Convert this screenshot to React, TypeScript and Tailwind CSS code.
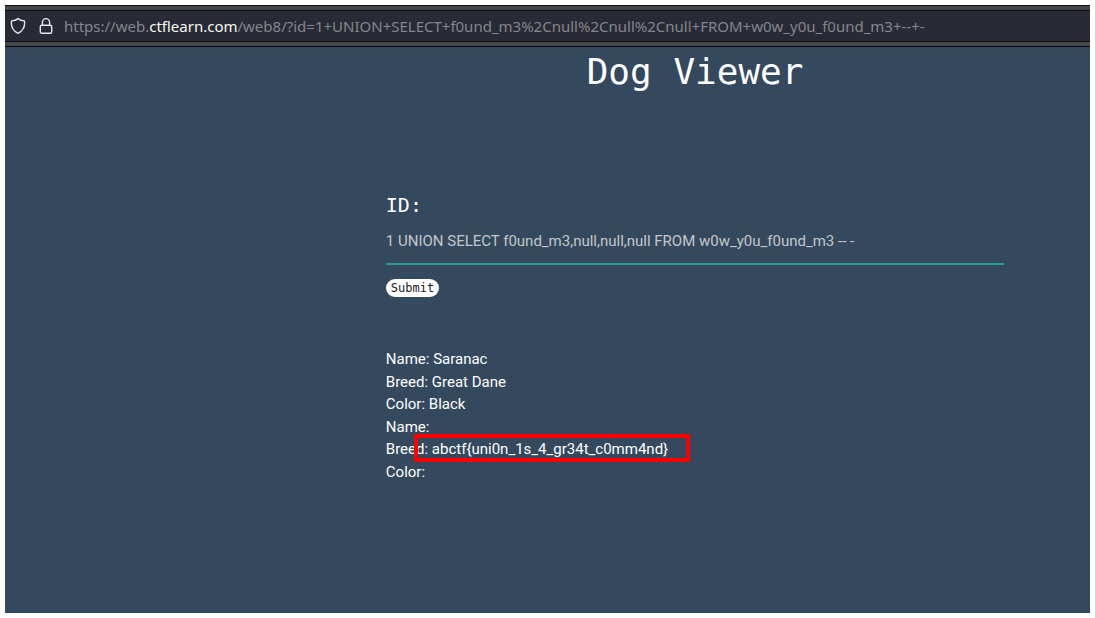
import { useState } from "react";

const query = "1 UNION SELECT f0und_m3,null,null,null FROM w0w_y0u_f0und_m3 -- -";

const dogs = [
  { name: "Saranac", breed: "Great Dane", color: "Black", flagged: false },
  { name: "", breed: "abctf{uni0n_1s_4_gr34t_c0mm4nd}", color: "", flagged: true },
];

function ShieldIcon() {
  return (
    <svg viewBox="0 0 16 18" className="h-[18px] w-4 shrink-0" fill="none" stroke="#e6e6ea" strokeWidth="1.4" strokeLinejoin="round" aria-hidden="true">
      <path d="M8 1.6C6.4 3 4.2 3.7 1.6 3.9C.7 9.6 3.3 14 8 16.4C12.700 14 15.300 9.600 14.400 3.900C11.800 3.700 9.600 3 8 1.600Z" />
    </svg>
  );
}

function LockIcon() {
  return (
    <svg viewBox="0 0 14 18" className="h-[18px] w-3.5 shrink-0" fill="none" stroke="#e6e6ea" strokeWidth="1.4" aria-hidden="true">
      <rect x="1.300" y="8.300" width="11.400" height="8" rx="1.500" />
      <path d="M3.400 8.300V5.200a3.600 3.600 0 0 1 7.200 0v3.100" />
    </svg>
  );
}

function AddressBar() {
  return (
    <header className="border-y border-[#0c0c0e] bg-[#43474c] py-1">
      <div className="flex h-8 items-center border-y border-[#0c0c0e] bg-[#282a36] pl-[5px]">
        <ShieldIcon />
        <div className="ml-[13px] flex">
          <LockIcon />
        </div>
        <p className="ml-[11px] overflow-hidden font-['Noto_Sans',sans-serif] text-[15px] whitespace-nowrap text-[#85868c]">
          https://web.<span className="text-[#f8f8f2]">ctflearn.com</span>
          /web8/?id=1+UNION+SELECT+f0und_m3%2Cnull%2Cnull%2Cnull+FROM+w0w_y0u_f0und_m3+--+-
        </p>
      </div>
    </header>
  );
}

export default function App() {
  const [id, setId] = useState(query);

  return (
    <div className="flex min-h-screen flex-col bg-white p-[5px]">
      <AddressBar />
      <main className="grow bg-[#34495e] pr-[7.9%] pl-[35.1%] font-['Roboto',sans-serif] text-[15px] leading-[1.5] text-white">
        <h1 className="text-center font-['DejaVu_Sans_Mono',monospace] text-4xl leading-[50px] font-normal">
          Dog Viewer
        </h1>
        <form className="mt-[90px]" onSubmit={(e) => e.preventDefault()}>
          <label htmlFor="dog-id" className="block font-['DejaVu_Sans_Mono',monospace] text-xl leading-9">
            ID:
          </label>
          <input
            id="dog-id"
            type="text"
            value={id}
            onChange={(e) => setId(e.target.value)}
            className="block h-[42px] w-full border-b-2 border-[#2a9d8f] pb-1 text-[#c3c7cb] outline-none"
          />
          <button
            type="submit"
            className="mt-3.5 block h-[18px] rounded-full bg-white px-[5px] font-['DejaVu_Sans_Mono',monospace] text-xs leading-[18px] text-[#222]"
          >
            Submit
          </button>
        </form>
        <section className="mt-[51px] whitespace-pre">
          {dogs.map((dog) => (
            <div key={dog.breed}>
              <p>Name: {dog.name}</p>
              <p className="relative w-fit">
                Breed: {dog.breed}
                {dog.flagged && (
                  <span className="absolute -top-1 -right-[22px] left-7 h-7 border-4 border-[#ff0000]" aria-hidden="true" />
                )}
              </p>
              <p>Color: {dog.color}</p>
            </div>
          ))}
        </section>
      </main>
    </div>
  );
}
